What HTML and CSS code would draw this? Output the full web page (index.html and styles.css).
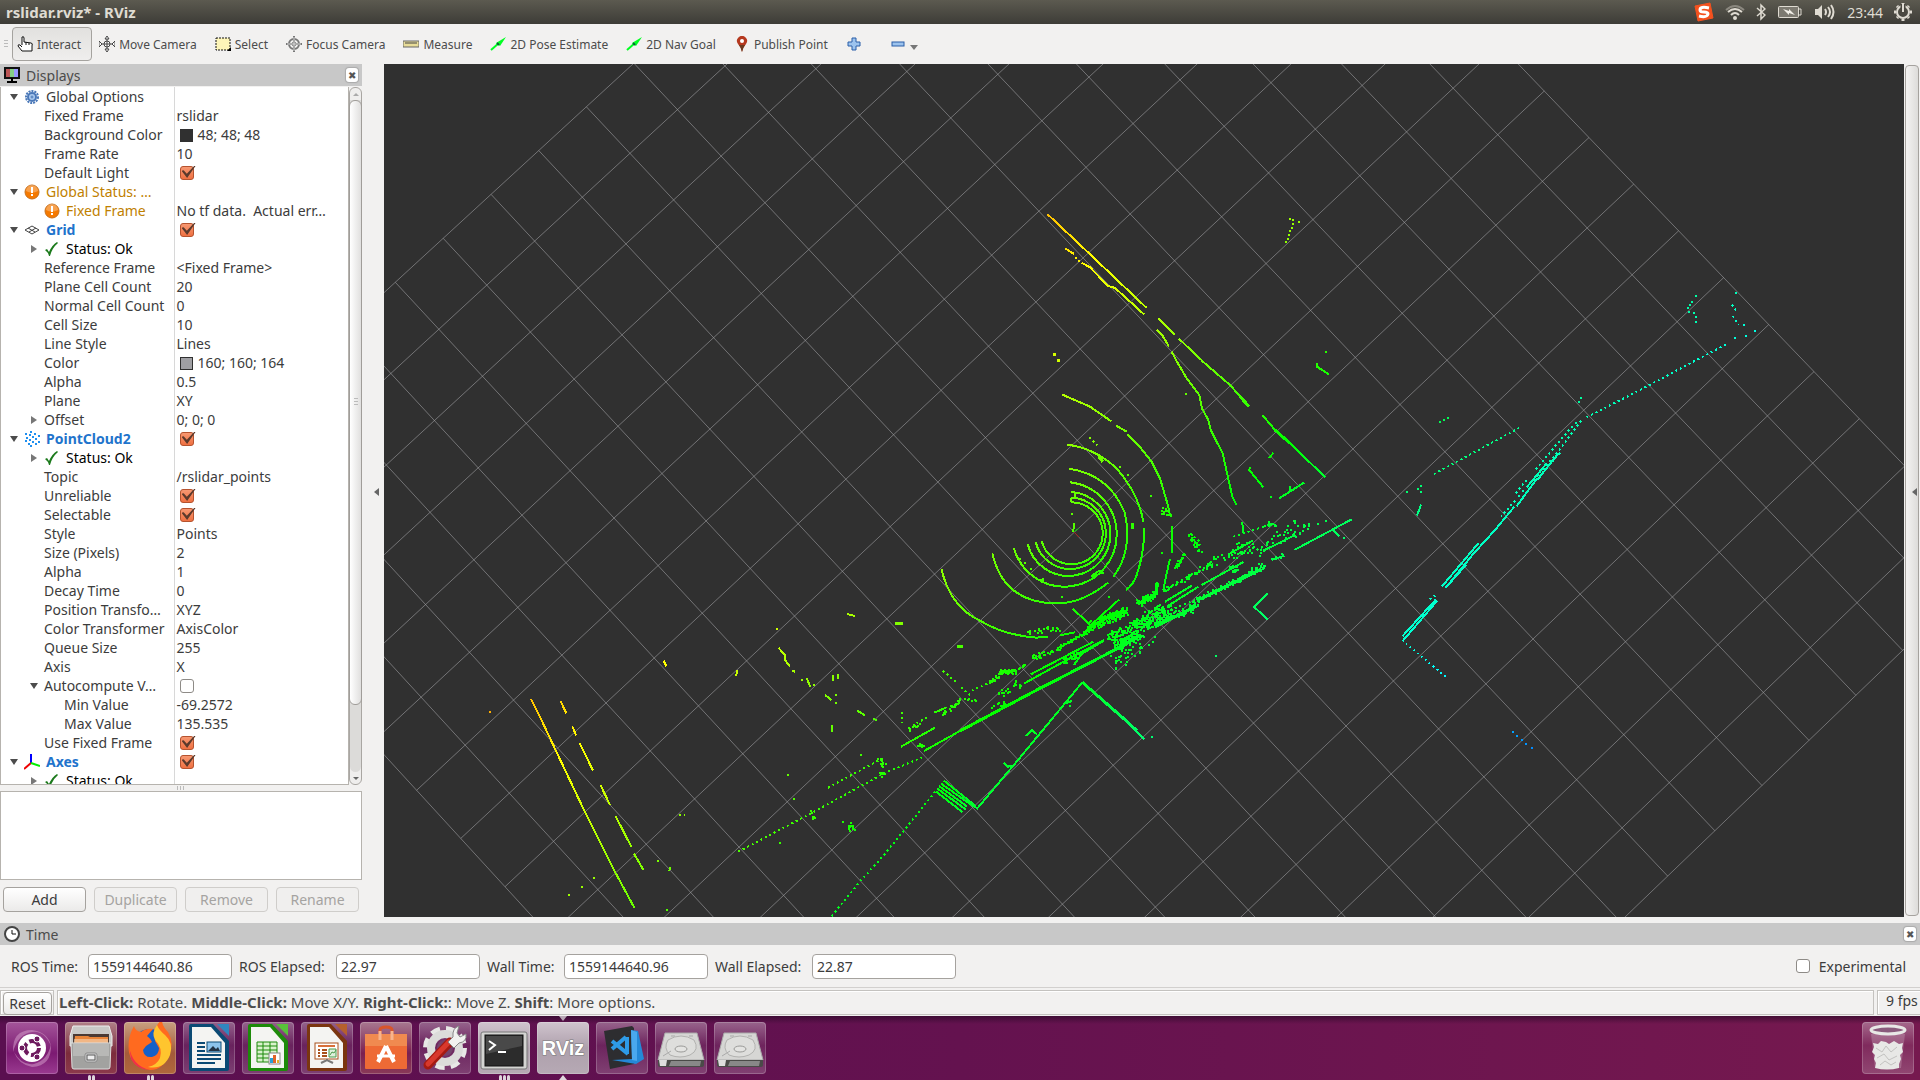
FILE: index.html
```html
<!DOCTYPE html>
<html lang="en">
<head>
    <meta charset="utf-8">
    <title>rslidar.rviz* - RViz</title>
    <meta name="viewport" content="width=device-width, initial-scale=1.0">
    <link rel="stylesheet" href="styles.css">
</head>
<body>
    <svg class="defs" width="0" height="0" aria-hidden="true">
        <symbol id="warn" viewBox="0 0 16 16">
            <circle cx="8" cy="8" r="7" fill="#f57900" stroke="#c8701c"/>
            <path d="M2 7a6 6 0 0 1 12 0q-6 3-12 0" fill="#fff" opacity=".3"/>
            <path d="M7 3h2v6H7zM7 10h2v2H7z" fill="#fff"/>
        </symbol>
        <symbol id="ok" viewBox="0 0 16 16">
            <path d="M1 9l2-1 2 3Q8 4 13 1l1 1Q8 7 6 15H5Q4 11 1 9z" fill="#1c7a1c"/>
        </symbol>
        <symbol id="arrow" viewBox="0 0 16 16">
            <path d="M1 14L9 7" stroke="#0f2" stroke-width="2"/>
            <path d="M6 7L16 1L10 10z" fill="#0f2"/>
            <path d="M7 7l2 2" stroke="#063" stroke-width="2"/>
        </symbol>
        <symbol id="disk" viewBox="0 0 52 52">
            <path d="M10 11h32l7 27H3z" fill="#d6d6d4" stroke="#aaa"/>
            <path d="M3 38h46v5q0 2-2 2H5q-2 0-2-2z" fill="#4a4a48"/>
            <path d="M16 39h30l-1 5H14z" fill="#888"/>
            <path d="M4 38h8l-1 6H5z" fill="#ddd"/>
            <path d="M13 18q13-8 26 0 6 10-4 15-10 4-20 0-7-7-2-15z" fill="#dededc" stroke="#b2b2b0"/>
            <ellipse cx="26" cy="27" rx="6" ry="3" fill="#e4e4e2" stroke="#9a9a98"/>
            <path d="M8 34l8-5M16 14h4M34 14h4" stroke="#aaa"/>
        </symbol>
    </svg>

    <header class="topbar">
        <h1>rslidar.rviz* - RViz</h1>
        <div class="indicators">
            <svg width="20" height="20" viewBox="0 0 20 20"><path d="M1 4L16 1L19 16L4 19z" fill="#f4511e" stroke="#f4511e" stroke-width="1" stroke-linejoin="round"/><path d="M15 6Q6 4 6 8Q6 10 10 10Q14 10 14 12Q13 16 5 14" fill="none" stroke="#fff" stroke-width="3"/></svg>
            <svg width="20" height="16" viewBox="0 0 20 16" fill="none" stroke="#dfdbd2" stroke-width="2"><path d="M1 6Q10-2 19 6" stroke="#8b887f"/><path d="M3 8Q10 2 17 8M6 11Q10 7 14 11"/><circle cx="10" cy="14" r="1"/></svg>
            <svg width="10" height="18" viewBox="0 0 10 18" fill="none" stroke="#dfdbd2" stroke-width="1.5"><path d="M1 5L9 12L5 16V2L9 6L1 13"/></svg>
            <svg width="26" height="14" viewBox="0 0 26 14"><rect x="1.5" y="1.5" width="20" height="11" rx="1" fill="#7d7a71" stroke="#dfdbd2"/><path d="M22 4h2v6h-2" fill="none" stroke="#dfdbd2"/><path d="M6 4l6 2 0-2 6 6-6-2 0 2z" fill="#f2efe8"/></svg>
            <svg width="22" height="18" viewBox="0 0 22 18" fill="none" stroke="#dfdbd2" stroke-width="2"><path d="M1 6h3l4-4v14l-4-4H1z" fill="#dfdbd2" stroke="none"/><path d="M11 6q2 3 0 6M14 4q4 5 0 10M17 2q5 7 0 14"/></svg>
            <time>23:44</time>
            <svg width="18" height="18" viewBox="0 0 18 18" fill="none" stroke="#dfdbd2"><circle cx="9" cy="9" r="6" stroke-width="2"/><path d="M9 0v2M9 16v2M0 9h2M16 9h2M3 3l1 1M15 3l-1 1M3 15l1-1M15 15l-1-1" stroke-width="3"/><path d="M9 1v9" stroke="#48463f" stroke-width="5"/><path d="M9 1v8" stroke-width="2"/></svg>
        </div>
    </header>

    <nav class="toolbar">
        <span class="grip"></span>
        <button class="tool active"><svg viewBox="0 0 16 16"><path d="M5 9V1q2-1 2 1v4l7 1q2 0 1 3v5H5L1 10q0-2 2-1l2 2" fill="#fff" stroke="#111"/><path d="M9 6v3M12 7v2" stroke="#111"/></svg>Interact</button>
        <button class="tool"><svg viewBox="0 0 16 16" fill="#fff" stroke="#444"><circle cx="8" cy="8" r="3"/><path d="M8 0l2 3H6zM8 16l2-3H6zM0 5l3 3-3 3zM16 5l-3 3 3 3z"/><path d="M3 8h10M8 3v10"/></svg>Move Camera</button>
        <button class="tool"><svg viewBox="0 0 16 16"><rect x="1" y="2" width="14" height="12" fill="#fdf5b8" stroke="#111" stroke-dasharray="2 1"/><path d="M16 11v4h-4z"/></svg>Select</button>
        <button class="tool"><svg viewBox="0 0 16 16" fill="none" stroke="#777"><circle cx="8" cy="8" r="5" stroke-width="2"/><circle cx="8" cy="8" r="2"/><path d="M8 0v16M0 8h16" stroke-width="2"/><path d="M8 1v14M1 8h14" stroke="#ddd"/></svg>Focus Camera</button>
        <button class="tool"><svg viewBox="0 0 16 16"><rect x="0" y="5" width="16" height="6" fill="#e8dc98" stroke="#666"/><path d="M3 6v2M5 6v2M7 6v2M9 6v2M11 6v2M13 6v2" stroke="#444"/></svg>Measure</button>
        <button class="tool"><svg><use href="#arrow"/></svg>2D Pose Estimate</button>
        <button class="tool"><svg><use href="#arrow"/></svg>2D Nav Goal</button>
        <button class="tool"><svg viewBox="0 0 16 16"><path d="M8 16Q7 11 4 8A5 5 0 1 1 12 8Q9 11 8 16z" fill="#b5391f"/><path d="M8 16Q7 12 5 9h6Q9 12 8 16z" fill="#6b3a20"/><circle cx="8" cy="5" r="2" fill="#fff"/></svg>Publish Point</button>
        <button class="tool small" aria-label="Add tool"><svg viewBox="0 0 16 16"><path d="M6 2h4v4h4v4h-4v4H6v-4H2V6h4z" fill="#9cc3ee" stroke="#2a5fa8"/></svg></button>
        <button class="tool small" aria-label="Remove tool"><svg viewBox="0 0 16 16"><rect x="2" y="6" width="12" height="4" fill="#9cc3ee" stroke="#2a5fa8"/></svg><span class="drop"></span></button>
    </nav>

    <main class="workspace">
        <aside class="displays">
            <div class="dock-title">
                <svg viewBox="0 0 16 16"><rect x="1" y="1" width="14" height="10" fill="#86d086" stroke="#111" stroke-width="2"/><path d="M2 2h4v8H2z" fill="#b55"/><path d="M10 2h4v8h-4z" fill="#99f"/><path d="M7 11h2v3H7zM3 14h10v2H3z"/></svg>
                <h2>Displays</h2>
                <button class="close" aria-label="Close Displays">✖</button>
            </div>
            <div class="tree">
                <div class="tree-view">
                    <table>
                        <tbody>
                            <tr><th><span class="name open"><svg viewBox="0 0 16 16" fill="none" stroke="#4a78b8"><circle cx="8" cy="8" r="6" stroke-width="2" stroke-dasharray="2 1"/><circle cx="8" cy="8" r="4" fill="#a9c8ee" stroke-width="2"/><circle cx="8" cy="8" r="1"/></svg>Global Options</span></th><td></td></tr>
                            <tr><th><span class="name l1">Fixed Frame</span></th><td>rslidar</td></tr>
                            <tr><th><span class="name l1">Background Color</span></th><td><i class="swatch dark"></i>48; 48; 48</td></tr>
                            <tr><th><span class="name l1">Frame Rate</span></th><td>10</td></tr>
                            <tr><th><span class="name l1">Default Light</span></th><td><input type="checkbox" aria-label="Default Light" checked></td></tr>
                            <tr class="warning"><th><span class="name open"><svg><use href="#warn"/></svg>Global Status: …</span></th><td></td></tr>
                            <tr class="warning"><th><span class="name l1"><svg><use href="#warn"/></svg>Fixed Frame</span></th><td>No tf data.&nbsp; Actual err…</td></tr>
                            <tr class="display"><th><span class="name open"><svg viewBox="0 0 16 16" fill="none" stroke="#444"><path d="M1 8l7-4 7 4-7 4zM4 6l7 4M12 6l-7 4"/></svg>Grid</span></th><td><input type="checkbox" aria-label="Grid" checked></td></tr>
                            <tr class="status"><th><span class="name l1 closed"><svg><use href="#ok"/></svg>Status: Ok</span></th><td></td></tr>
                            <tr><th><span class="name l1">Reference Frame</span></th><td>&lt;Fixed Frame&gt;</td></tr>
                            <tr><th><span class="name l1">Plane Cell Count</span></th><td>20</td></tr>
                            <tr><th><span class="name l1">Normal Cell Count</span></th><td>0</td></tr>
                            <tr><th><span class="name l1">Cell Size</span></th><td>10</td></tr>
                            <tr><th><span class="name l1">Line Style</span></th><td>Lines</td></tr>
                            <tr><th><span class="name l1">Color</span></th><td><i class="swatch"></i>160; 160; 164</td></tr>
                            <tr><th><span class="name l1">Alpha</span></th><td>0.5</td></tr>
                            <tr><th><span class="name l1">Plane</span></th><td>XY</td></tr>
                            <tr><th><span class="name l1 closed">Offset</span></th><td>0; 0; 0</td></tr>
                            <tr class="display"><th><span class="name open"><svg viewBox="0 0 16 16" fill="none" stroke="#2090f0" stroke-width="2"><path d="M6 1h2M1 3h2M10 3h2M5 4h2M14 5h2M2 7h2M8 6h2M11 8h2M5 9h2M1 10h2M14 11h2M8 11h2M4 13h2M11 13h2M6 15h2"/></svg>PointCloud2</span></th><td><input type="checkbox" aria-label="PointCloud2" checked></td></tr>
                            <tr class="status"><th><span class="name l1 closed"><svg><use href="#ok"/></svg>Status: Ok</span></th><td></td></tr>
                            <tr><th><span class="name l1">Topic</span></th><td>/rslidar_points</td></tr>
                            <tr><th><span class="name l1">Unreliable</span></th><td><input type="checkbox" aria-label="Unreliable" checked></td></tr>
                            <tr><th><span class="name l1">Selectable</span></th><td><input type="checkbox" aria-label="Selectable" checked></td></tr>
                            <tr><th><span class="name l1">Style</span></th><td>Points</td></tr>
                            <tr><th><span class="name l1">Size (Pixels)</span></th><td>2</td></tr>
                            <tr><th><span class="name l1">Alpha</span></th><td>1</td></tr>
                            <tr><th><span class="name l1">Decay Time</span></th><td>0</td></tr>
                            <tr><th><span class="name l1">Position Transfo…</span></th><td>XYZ</td></tr>
                            <tr><th><span class="name l1">Color Transformer</span></th><td>AxisColor</td></tr>
                            <tr><th><span class="name l1">Queue Size</span></th><td>255</td></tr>
                            <tr><th><span class="name l1">Axis</span></th><td>X</td></tr>
                            <tr><th><span class="name l1 open">Autocompute V…</span></th><td><input type="checkbox" aria-label="Autocompute Value Bounds"></td></tr>
                            <tr><th><span class="name l2">Min Value</span></th><td>-69.2572</td></tr>
                            <tr><th><span class="name l2">Max Value</span></th><td>135.535</td></tr>
                            <tr><th><span class="name l1">Use Fixed Frame</span></th><td><input type="checkbox" aria-label="Use Fixed Frame" checked></td></tr>
                            <tr class="display"><th><span class="name open"><svg viewBox="0 0 16 16" fill="none" stroke-width="2"><path d="M7 0v9" stroke="#00f"/><path d="M7 9L0 15" stroke="#e00"/><path d="M7 9l9 3" stroke="#0e0"/></svg>Axes</span></th><td><input type="checkbox" aria-label="Axes" checked></td></tr>
                            <tr class="status"><th><span class="name l1 closed"><svg><use href="#ok"/></svg>Status: Ok</span></th><td></td></tr>
                        </tbody>
                    </table>
                </div>
                <div class="scrollbar">
                    <span class="step up"></span>
                    <div class="track"><div class="thumb"><span class="grip"></span></div></div>
                    <span class="step down"></span>
                </div>
            </div>
            <div class="splitter"><span class="grip"></span></div>
            <div class="description"></div>
            <div class="actions">
                <button>Add</button>
                <button disabled>Duplicate</button>
                <button disabled>Remove</button>
                <button disabled>Rename</button>
            </div>
        </aside>

        <button class="collapse" aria-label="Collapse left panel"></button>

        <svg class="view" viewBox="384 64 1520 853" preserveAspectRatio="xMidYMid slice" shape-rendering="crispEdges" role="img" aria-label="3D view">
            <defs>
                <!-- AxisColor rainbow, running along the X axis of the grid -->
                <linearGradient id="rainbow" gradientUnits="userSpaceOnUse" x1="765" y1="203" x2="1679" y2="1176">
                    <stop offset="0" stop-color="#f00"/>
                    <stop offset=".2" stop-color="#ff0"/>
                    <stop offset=".4" stop-color="#0f0"/>
                    <stop offset=".6" stop-color="#0ff"/>
                    <stop offset=".8" stop-color="#00f"/>
                    <stop offset="1" stop-color="#f0f"/>
                </linearGradient>
            </defs>
            <path id="grid"/>
            <g id="cloud"></g>
            <path d="M1074 532l5 5" stroke="#a22"/>
            <path d="M1074 532l5-4" stroke="#2a2"/>
        </svg>

        <button class="collapse right" aria-label="Collapse right panel"></button>
    </main>

    <section class="time">
        <div class="dock-title">
            <svg viewBox="0 0 16 16"><circle cx="8" cy="8" r="7" fill="#fff" stroke="#444" stroke-width="2"/><path d="M8 4v4h4" fill="none" stroke="#111"/></svg>
            <h2>Time</h2>
            <button class="close" aria-label="Close Time">✖</button>
        </div>
        <form class="clocks">
            <label for="rosTime">ROS Time:</label>
            <input type="text" id="rosTime" value="1559144640.86">
            <label for="rosElapsed" class="long">ROS Elapsed:</label>
            <input type="text" id="rosElapsed" value="22.97">
            <label for="wallTime">Wall Time:</label>
            <input type="text" id="wallTime" value="1559144640.96">
            <label for="wallElapsed" class="long">Wall Elapsed:</label>
            <input type="text" id="wallElapsed" value="22.87">
            <label class="experimental"><input type="checkbox"> Experimental</label>
        </form>
    </section>

    <footer class="statusbar">
        <div class="cell reset"><button>Reset</button></div>
        <p class="cell message"><b>Left-Click:</b> Rotate. <b>Middle-Click:</b> Move X/Y. <b>Right-Click:</b>: Move Z. <b>Shift</b>: More options.</p>
        <div class="cell fps">9 fps</div>
    </footer>

    <nav class="launcher">
        <a href="#" class="app dash" aria-label="Search your computer"><svg viewBox="0 0 52 52"><path d="M7 30Q6 8 26 8Q42 10 45 24Q38 8 26 10Q12 12 7 30zM45 22Q46 44 26 45Q12 42 8 30Q16 44 28 42Q42 38 45 22z" fill="#d9a3d0" opacity=".5"/><circle cx="26" cy="26" r="14" fill="#fff"/><circle cx="26" cy="26" r="7" fill="none" stroke="#6d1a5e" stroke-width="4" stroke-dasharray="12 3"/><g fill="#6d1a5e" stroke="#fff"><circle cx="16" cy="26" r="3"/><circle cx="31" cy="17" r="3"/><circle cx="31" cy="35" r="3"/></g></svg></a>
        <a href="#" class="app files" aria-label="Files"><svg viewBox="0 0 52 52"><path d="M8 4h36l3 10v10H5V14z" fill="#c9c9c7" stroke="#eee"/><path d="M8 12h36v12H8z" fill="#4a3a34"/><path d="M10 14h13l2 1h18v8H9z" fill="#e8853a"/><path d="M9 18h34M9 20h34" stroke="#fbe8d0"/><path d="M6 21h40l-1 24q0 2-2 2H9q-2 0-2-2z" fill="#a2a2a0" stroke="#ddd"/><path d="M8 22h36v12H8z" fill="#b8b8b6"/><rect x="20" y="31" width="12" height="9" rx="2" fill="#ddd" stroke="#888"/><rect x="22" y="33" width="8" height="5" fill="#eee" stroke="#555"/></svg><span class="pips"><i></i><i></i></span></a>
        <a href="#" class="app firefox" aria-label="Firefox"><svg viewBox="0 0 52 52"><circle cx="26" cy="26" r="19" fill="#1560c8"/><path d="M10 4q1 5 7 6 5-4 12-3l-6 7q4 3 5 6l-6 4-3 4q1 8 9 7 7-2 7-9l-4-7q6-5 2-9-6-4-1-2 0-6 6-10 0 6 6 12 6 10 2 20Q40 48 26 48 8 46 5 30 3 16 10 4z" fill="#ff6a1f"/><path d="M33 3q-6 8-2 15 8 8 5 18-3 7-12 9 16 3 22-12 4-12-5-20-6-5-8-10z" fill="#ffc52e"/><path d="M5 24q3 20 21 24-13 0-19-11z" fill="#f03048"/></svg><span class="pips"><i></i><i></i></span></a>
        <a href="#" class="app" aria-label="LibreOffice Writer"><svg viewBox="0 0 52 52"><path d="M8 2h22l16 17v28q0 2-2 2H8q-2 0-2-2V4q0-2 2-2z" fill="#0b4a74"/><path d="M34 2h12v12z" fill="#2f86bf"/><path d="M9 5h19l14 16v25H9z" fill="#f4f4f2"/><path d="M14 21h8M14 25h8M14 29h8M14 33h24M14 37h24M14 41h18" stroke="#0b4a74" stroke-width="2"/><rect x="24" y="20" width="14" height="10" fill="#8cc4ec" stroke="#0b4a74"/><path d="M25 29l5-5 3 3 2-2 2 4z" fill="#234"/></svg></a>
        <a href="#" class="app" aria-label="LibreOffice Calc"><svg viewBox="0 0 52 52"><path d="M8 2h22l16 17v28q0 2-2 2H8q-2 0-2-2V4q0-2 2-2z" fill="#1d8a0a"/><path d="M34 2h12v12z" fill="#58c13a"/><path d="M9 5h19l14 16v25H9z" fill="#f4f4f2"/><path d="M15 20h20v20H15zM15 24h20M15 28h20M15 32h20M15 36h20M21 20v20M28 20v20" fill="#d9f2cc" stroke="#1d8a0a"/><rect x="27" y="31" width="11" height="11" fill="#fff" stroke="#888"/><path d="M28 36h3v5h-3z" fill="#28a0d8"/><path d="M31 33h3v8h-3z" fill="#e0642a"/><path d="M35 38h2v3h-2z" fill="#e8b020"/></svg></a>
        <a href="#" class="app" aria-label="LibreOffice Impress"><svg viewBox="0 0 52 52"><path d="M8 2h22l16 17v28q0 2-2 2H8q-2 0-2-2V4q0-2 2-2z" fill="#7a3510"/><path d="M34 2h12v12z" fill="#b5602c"/><path d="M9 5h19l14 16v25H9z" fill="#f4f4f2"/><rect x="14" y="21" width="23" height="16" fill="#fff" stroke="#a8501c"/><path d="M17 24h17" stroke="#d8703a" stroke-width="2"/><path d="M17 28h2M17 31h2M17 34h2M21 28h5M21 31h5M21 34h5" stroke="#a8501c" stroke-width="2"/><path d="M28 27h7v8h-7zM29 33l2-3 2 1 2-3" fill="#dff0dc" stroke="#4a9a4a"/><path d="M26 37v2M20 41l6-3 6 3" fill="none" stroke="#777" stroke-width="2"/></svg></a>
        <a href="#" class="app store" aria-label="Ubuntu Software"><svg viewBox="0 0 52 52"><path d="M20 18V8q0-3 6-3t6 3v10" fill="none" stroke="#d9552a" stroke-width="3"/><path d="M5 12h42v34q0 1-1 1H6q-1 0-1-1z" fill="#ee6a35"/><path d="M5 12h42v12H5z" fill="#f08a50"/><path d="M20 18V9M32 18V9" stroke="#f7b48e" stroke-width="3"/><path d="M26 24L18 40M26 24l8 16" stroke="#fff" stroke-width="4"/><path d="M17 34h18" stroke="#fff" stroke-width="3"/></svg></a>
        <a href="#" class="app" aria-label="System Settings"><svg viewBox="0 0 52 52"><circle cx="26" cy="26" r="19" fill="none" stroke="#e8e8e6" stroke-width="6" stroke-dasharray="9 6"/><circle cx="26" cy="26" r="14" fill="none" stroke="#dcdcda" stroke-width="8"/><circle cx="26" cy="26" r="8" fill="#74436c"/><path d="M9 43L31 20" stroke="#a51a12" stroke-width="9" stroke-linecap="round"/><path d="M9 42L30 20" stroke="#d8382c" stroke-width="5" stroke-linecap="round"/><path d="M29 20l5-5q-1-9 6-11l-2 7 3 4 6-3q1 8-7 9l-5 5z" fill="#f2f2f0" stroke="#888"/></svg></a>
        <a href="#" class="app running" aria-label="Terminal"><svg viewBox="0 0 52 52"><rect x="3" y="10" width="46" height="37" rx="2" fill="#d4d4d2" stroke="#777"/><rect x="7" y="13" width="38" height="31" fill="#2c2c2c" stroke="#111"/><path d="M8 14h36v10L8 32z" fill="#666" opacity=".5"/><path d="M11 19l6 4-6 5" fill="none" stroke="#fff" stroke-width="2"/><path d="M20 30h8" stroke="#fff" stroke-width="2"/></svg><span class="pips"><i></i><i></i><i></i></span></a>
        <a href="#" class="app running focused" aria-label="RViz"><svg viewBox="0 0 52 52"><text x="26" y="33" text-anchor="middle" class="rviz-logo">RViz</text></svg></a>
        <a href="#" class="app" aria-label="Visual Studio Code"><svg viewBox="0 0 52 52"><path d="M8 9l28-5 2 2v36L14 47z" fill="#2d2d30"/><path d="M35 8l7 1 6 28-8 5-24-4 20-1z" fill="#2489d8"/><path d="M35 8l1 30 5 1V10z" fill="#4aa8ee"/><path d="M30 15L16 27M16 19l16 13M31 15v17" fill="none" stroke="#2e9be8" stroke-width="4"/></svg></a>
        <a href="#" class="app" aria-label="Volume"><svg><use href="#disk"/></svg></a>
        <a href="#" class="app" aria-label="Volume"><svg><use href="#disk"/></svg></a>
        <a href="#" class="app trash" aria-label="Trash"><svg viewBox="0 0 52 52"><path d="M9 12h34l-4 34H13z" fill="#fff" opacity=".2"/><path d="M11 21l5 1 3-3 5 1 3 2 5-3 5 3 4-1-1 5 1 4-3 3 1 4-2 5v4q-12 3-24 0l1-5-2-4 1-4-3-3 2-5z" fill="#e8e8e6"/><path d="M14 26l6 4 4-6 5 6 6-5M15 36l7-4 5 6 8-4M18 43l5-4 6 4 5-3" fill="none" stroke="#c2c2c0"/><ellipse cx="26" cy="8" rx="17" ry="4" fill="#8a5a7c" stroke="#e8e8e6" stroke-width="3"/></svg></a>
    </nav>

    <script src="scene.js"></script>
</body>
</html>
```
FILE: styles.css
```css
* {
    box-sizing: border-box;
}
body {
    margin: 0;
    height: 100vh;
    display: flex;
    flex-direction: column;
    overflow: hidden;
    background: #f2f1f0;
    color: #3c3c3c;
    font-family: "Noto Sans", "Open Sans", sans-serif;
    font-size: 14px;
}
h1, h2, p {
    margin: 0;
}
button, input {
    font: inherit;
    color: inherit;
}
button {
    padding: 0;
}
svg {
    display: block;
    flex: none;
}
.defs {
    position: absolute;
}
.topbar {
    display: flex;
    align-items: center;
    justify-content: space-between;
    flex: none;
    height: 24px;
    padding: 0 8px 0 6px;
    background: linear-gradient(#5c5a50, #3d3c37);
    color: #dfdbd2;
}
.topbar h1 {
    font-size: 15px;
    font-weight: bold;
}
.indicators {
    display: flex;
    align-items: center;
    gap: 11px;
}

/* toolbar */
.toolbar {
    display: flex;
    align-items: center;
    flex: none;
    gap: 2px;
    height: 40px;
    padding: 0 4px;
}
.grip {
    width: 4px;
    height: 8px;
    background: repeating-linear-gradient(#bbb 0 1px, transparent 1px 3px);
}
.tool {
    display: flex;
    align-items: center;
    gap: 4px;
    height: 34px;
    padding: 0 10px 0 4px;
    border: 1px solid transparent;
    border-radius: 4px;
    background: none;
    color: #4c4c4c;
    font-size: 12px;
}
.toolbar > .grip + .tool {
    margin-left: 2px;
}
.tool svg {
    width: 16px;
    height: 16px;
}
.tool.active {
    border-color: #a5a39f;
    background: linear-gradient(#e2e1df, #efeeed);
}
.tool.small {
    padding-right: 20px;
}
.drop {
    margin-top: 6px;
    border: 4px solid transparent;
    border-top: 5px solid #777;
    border-bottom: 0;
}

/* docks */
.workspace {
    display: flex;
    flex: 1;
    min-height: 0;
    padding-bottom: 6px;
}
.displays {
    display: flex;
    flex-direction: column;
    flex: none;
    width: 362px;
}
.dock-title {
    display: flex;
    align-items: center;
    gap: 6px;
    flex: none;
    height: 22px;
    padding: 0 4px;
    background: #c8c8c8;
    color: #4c4c4c;
}
.dock-title svg {
    width: 16px;
    height: 16px;
}
.dock-title h2 {
    flex: 1;
    font-size: 14px;
    font-weight: normal;
}
.close {
    width: 12px;
    height: 14px;
    border: 0;
    border-radius: 3px;
    background: #fff;
    box-shadow: 0 0 1px 1px #aaa;
    color: #555;
    font-size: 10px;
    line-height: 14px;
}
.tree {
    display: flex;
    flex: 1;
    min-height: 0;
    margin-top: 1px;
}
.tree-view {
    flex: 1;
    overflow: hidden;
    border: solid #b6b3ae;
    border-width: 0 1px 1px;
    background: #fff;
}
.tree table {
    width: 100%;
    table-layout: fixed;
    border-collapse: collapse;
}
.tree tr {
    height: 19px;
}
.tree th, .tree td {
    padding: 0;
    height: 19px;
    line-height: 19px;
    font-weight: normal;
    text-align: left;
    white-space: nowrap;
    overflow: hidden;
}
.tree th {
    width: 173px;
    border-right: 1px solid #d8d8d8;
}
.tree td {
    padding-left: 2px;
}
.name {
    display: flex;
    align-items: center;
    padding-left: 9px;
}
.name.l1 {
    padding-left: 29px;
}
.name.l2 {
    padding-left: 49px;
}
.name::before {
    content: "";
    width: 8px;
    margin-right: 6px;
}
.name.open::before {
    width: 0;
    border: 4px solid transparent;
    border-top: 6px solid #4c4c4c;
    border-bottom: 0;
}
.name.closed::before {
    width: 0;
    margin: 0 7px 0 1px;
    border: 4px solid transparent;
    border-left: 6px solid #777;
    border-right: 0;
}
.name svg {
    width: 16px;
    height: 16px;
    margin-right: 6px;
}
.warning th {
    color: #c08000;
}
.display th {
    color: #1f74cc;
    font-weight: bold;
}
.status th {
    color: #000;
}
.swatch {
    display: inline-block;
    width: 13px;
    height: 13px;
    margin: 0 5px 0 3px;
    vertical-align: -2px;
    border: 1px solid #303030;
    background: #a0a0a4;
}
.swatch.dark {
    background: #303030;
}
input[type="checkbox"] {
    appearance: none;
    position: relative;
    width: 14px;
    height: 14px;
    margin: 0 3px;
    vertical-align: -2px;
    border: 1px solid #8e8b87;
    border-radius: 3px;
    background: #fff;
}
input[type="checkbox"]:checked {
    border-color: #b5532f;
    background: linear-gradient(#f79872, #ef7142);
}
input[type="checkbox"]:checked::before {
    content: "";
    position: absolute;
    left: 1px;
    top: -1px;
    width: 14px;
    height: 12px;
    background: #5c3a2c;
    clip-path: polygon(0 40%, 15% 35%, 38% 65%, 90% 0, 100% 0, 40% 100%);
}
.scrollbar {
    display: flex;
    flex-direction: column;
    width: 13px;
    border: 1px solid #a9a6a2;
    border-radius: 6px;
    background: #efeeed;
}
.step {
    display: flex;
    align-items: center;
    justify-content: center;
    height: 12px;
}
.step::before {
    content: "";
    border: 3px solid transparent;
}
.step.up::before {
    border-bottom-color: #aaa;
    border-top: 0;
}
.step.down::before {
    border-top-color: #666;
    border-bottom: 0;
}
.track {
    flex: 1;
    border-radius: 0 0 6px 6px;
    background: #dcdbd9;
}
.thumb {
    display: flex;
    align-items: center;
    justify-content: center;
    height: 90%;
    margin: 0 -1px;
    border: 1px solid #a09d99;
    border-radius: 6px;
    background: linear-gradient(90deg, #fff, #e0dfde);
}
.splitter {
    display: flex;
    align-items: center;
    justify-content: center;
    flex: none;
    height: 6px;
}
.splitter .grip {
    width: 8px;
    height: 4px;
    background: repeating-linear-gradient(90deg, #bbb 0 1px, transparent 1px 3px);
}
.description {
    flex: none;
    height: 89px;
    border: 1px solid #b6b3ae;
    background: #fff;
}
.actions {
    display: grid;
    grid-template-columns: repeat(4, 1fr);
    gap: 8px;
    padding: 7px 3px 5px;
}
.actions button, .reset button {
    height: 25px;
    border: 1px solid #a5a29e;
    border-radius: 4px;
    background: linear-gradient(#fff, #ebeae9);
    line-height: 21px;
}
.actions button:disabled {
    border-color: #cfcdca;
    background: #f0efee;
    color: #a5a3a1;
}

.collapse {
    flex: none;
    width: 22px;
    border: 0;
    background: none;
}
.collapse::before {
    content: "";
    display: inline-block;
    margin-left: 6px;
    border: 4px solid transparent;
    border-right: 5px solid #666;
    border-left: 0;
}
.collapse.right {
    width: 14px;
    margin: 1px;
    border: 1px solid #a5a29e;
    border-radius: 4px;
    background: linear-gradient(90deg, #f4f3f2, #dddcda);
}
.collapse.right::before {
    margin-left: 4px;
}

/* 3D view */
.view {
    flex: 1;
    min-width: 0;
    height: 100%;
    background: #303030;
}
#grid {
    fill: none;
    stroke: #a0a0a4;
    stroke-opacity: .6;
    shape-rendering: auto;
}
#cloud {
    fill: none;
    stroke: url(#rainbow);
    stroke-width: 2;
}

/* time panel */
.time {
    flex: none;
}
.clocks {
    display: flex;
    align-items: center;
    gap: 7px;
    height: 42px;
    padding: 0 14px 0 11px;
}
.clocks label {
    width: 70px;
    white-space: nowrap;
}
.clocks label.long {
    width: 90px;
}
.clocks input[type="text"] {
    width: 144px;
    height: 25px;
    padding: 0 4px;
    border: 1px solid #a5a29e;
    border-radius: 4px;
    background: #fff;
}
.clocks label.experimental {
    display: flex;
    align-items: center;
    gap: 6px;
    width: auto;
    margin-left: auto;
}

/* status bar */
.statusbar {
    display: flex;
    flex: none;
    gap: 3px;
    height: 29px;
    padding: 2px 0 1px;
    border-top: 1px solid #d2d0ce;
}
.cell {
    border: 1px solid #c4c2bf;
    box-shadow: inset 1px 1px #fff;
    line-height: 24px;
    white-space: nowrap;
}
.reset {
    width: 54px;
    padding: 1px 1px 0 2px;
}
.reset button {
    width: 49px;
    height: 23px;
}
.message {
    flex: 1;
    padding-left: 1px;
    color: #4c4c4c;
    font-size: 15px;
    line-height: 22px;
}
.fps {
    width: 43px;
    padding-left: 8px;
    border-right: 0;
    line-height: 20px;
}

/* launcher */
.launcher {
    display: flex;
    flex: none;
    gap: 7px;
    height: 64px;
    padding: 6px 6px 0;
    background: linear-gradient(#2b0a28aa, transparent 8px), linear-gradient(90deg, #5a0f50, #64124f 50%, #76194f);
}
.app {
    position: relative;
    width: 52px;
    height: 52px;
    border-radius: 4px;
    background: linear-gradient(rgba(255, 255, 255, .35), rgba(255, 255, 255, .08) 45%, rgba(255, 255, 255, .2));
    box-shadow: inset 0 0 0 1px rgba(255, 255, 255, .2);
}
.app svg {
    width: 52px;
    height: 52px;
}
.dash {
    background: linear-gradient(#a4559a, #7c1a72 60%, #9a3a90);
}
.files {
    background: linear-gradient(#b08088, #7c2c3c 60%, #8c3a4c);
}
.firefox {
    background: linear-gradient(#c8a080, #a45a3a 60%, #b0683c);
}
.store {
    background: linear-gradient(#a87890, #7a2050 60%, #8a3a58);
}
.running {
    background: linear-gradient(#d0c4ce, #aea0ac 50%, #b6a9b4);
}
.trash {
    margin-left: auto;
}
.pips {
    position: absolute;
    left: 0;
    right: 0;
    bottom: -6px;
    display: flex;
    justify-content: center;
    gap: 1px;
}
.pips i {
    width: 3px;
    height: 5px;
    border-radius: 2px 2px 0 0;
    background: #ded6dc;
}
.focused::before, .focused::after {
    content: "";
    position: absolute;
    left: 22px;
    border: 4px solid transparent;
}
.focused::before {
    top: -6px;
    border-top: 5px solid #b9a8b6;
    border-bottom: 0;
}
.focused::after {
    bottom: -6px;
    border-bottom: 5px solid #ded6dc;
    border-top: 0;
}
.rviz-logo {
    fill: #fff;
    stroke: #777;
    stroke-width: 1px;
    paint-order: stroke;
    font: bold 20px "Liberation Sans", sans-serif;
}
```
FILE: scene.js
```js
const SVG = 'http://www.w3.org/2000/svg';
const cloud = document.getElementById('cloud');

// ground plane (cells from the origin) to screen
function project(u, v) {
    const w = 1 - 0.001195 * u + 0.001114 * v;
    return [
        1074.3 + (44.57 * u + 47.52 * v) / w,
        532.3 + (47.47 * u - 44.62 * v) / w
    ].map(n => n.toFixed(1)).join(' ');
}

let grid = '';
for (let i = -10; i <= 10; i++) {
    grid += `M${project(i, -10)}L${project(i, 10)}`;
    grid += `M${project(-10, i)}L${project(10, i)}`;
}
document.getElementById('grid').setAttribute('d', grid);

// fixed seed, so that the cloud is the same on each load
let seed = 7;
function random() {
    seed = (seed * 16807) % 2147483647;
    return seed / 2147483647;
}

// Scan tiles. Coordinates are thirds of a pixel from the tile's corner.
// solid: path with a width, dashed: sparse returns, dots: single returns,
// noise: [x1, y1, x2, y2, spread, count]
const tiles = [
    {
        x: 880, y: 360,
        solid: [
            'M572 427A93 93 0 1 1 485 543M574 413A107 107 0 1 1 467 546M574 396A126 126 0 1 1 443 552M571 367A157 157 0 1 1 402 565',
            'M568 326Q690 345 735 460Q758 575 700 650M684 668Q600 735 520 730Q370 725 337 580',
            'M560 254Q640 262 710 325Q775 400 790 485M793 503Q793 580 770 645Q760 675 738 690M184 626Q210 740 300 782Q370 825 470 833L505 830',
            'M545 103L630 140L694 184M709 197L740 215M742 224L775 255L815 305L840 355L865 440L870 468M876 498L876 578M870 596L860 640L850 690',
            'M888 0L920 55L958 105L966 145L985 180L992 210L1028 280L1048 370L1057 410L1070 436M963 0L1050 75L1107 139M1148 166L1185 210L1230 250L1336 352',
            'M1181 278L1167 294M1110 320L1108 330L1150 382M1198 415L1272 368M1231 378L1231 392M582 490L580 515M574 413V427M585 400V412',
            'M433 970L560 900L672 840M452 943L640 845M582 915L605 882L670 843M855 725L935 677M860 740L955 680M965 675L1090 606',
            'M1243 570L1415 478M1358 510L1378 530M1150 572L1245 525M1045 583L1118 542M1087 487L1089 520M1175 600L1210 588L1205 580',
            'M1162 700L1123 741L1163 779M607 967L414 1200M438 1128L455 1110L472 1124M578 746L632 796L718 718M540 826L585 817',
            'M63 1160L165 1103M163 1058L200 1042M530 866L575 843M132 1173L245 1110L370 1045L455 998L575 937L700 870L760 835M1009 884V890M745 1088L792 1138'
        ],
        thick: 'M1185 210L1230 250M1080 110L1107 139M655 288L668 305M757 488V506M44 789L68 792M230 859L248 861M240 1113L455 998L700 872L785 825M607 967L745 1088L770 1112M825 800L950 738M950 722L1140 630M610 820L650 790L700 762L740 754M775 730L810 715L828 700V670M370 935L408 932',
        dashed: 'M628 231L652 255M188 932L233 970M243 982L270 1005M275 992L320 972L340 955M67 1055V1090M110 1090L145 1070M850 690L1000 610M890 625L918 580M930 520L960 545L955 580M1060 530L1180 490M1130 570L1150 560M870 750L960 715',
        dots: [[576,463],[812,409],[720,320],[744,345],[918,101],[1174,412],[545,712],[686,712],[453,628],[435,608],[420,598],[845,580],[1392,535],[815,1130],[825,832],[808,855],[1245,482],[1288,492],[1315,492],[1338,482]],
        noise: [
            [330,970,370,935,12,30],[365,935,408,935,12,30],[460,895,540,865,14,26],[530,866,630,812,8,40],[630,800,740,754,24,140],
            [190,1065,240,1022,10,24],[240,1022,285,1020,8,8],[345,1040,380,1035,20,12],[360,1005,420,970,22,22],[415,925,435,918,8,8],
            [775,730,830,700,20,60],[830,700,832,668,6,20],[690,835,780,790,30,90],[775,790,860,750,40,130],[710,860,785,820,22,90],
            [800,800,950,735,26,80],[700,910,800,850,50,46],[545,910,600,875,22,26],[850,695,1000,610,14,44],[885,625,918,580,10,18],
            [930,522,962,580,12,20],[950,722,1145,625,14,90],[1055,630,1075,625,20,24],[1120,630,1150,620,18,24],[1000,605,1100,570,30,22],
            [1070,560,1140,575,36,20],[1150,500,1185,490,16,12],[1160,540,1280,510,32,28],[1225,490,1290,495,18,8],[440,820,540,803,18,24],
            [635,650,675,630,12,24],[480,660,495,665,8,10],[845,450,872,468,14,12],[80,1110,120,1095,14,12],[110,1155,130,1160,10,8],[570,1025,565,1040,14,6],[1175,600,1210,588,10,8]
        ]
    },
    {
        x: 1000, y: 180,
        solid: [
            'M143 103L265 218L440 384M196 205L222 222M245 248L270 262L305 298L325 318L345 324L385 360L433 404',
            'M475 416L525 464M537 476L603 540M470 449L487 466L507 500M515 515L528 540M951 550V560L986 583'
        ],
        thick: 'M160 523H168M171 541H179',
        dots: [[227,233],[238,243],[870,117],[880,121],[880,133],[875,143],[869,153],[866,165],[863,176],[858,186],[898,127],[979,516]],
        noise: []
    },
    {
        x: 1380, y: 260,
        solid: [
            'M345 810L277 885L200 980M295 850L186 979M258 915L197 983M168 1018L68 1128M172 1022L68 1143M403 740L345 810',
            'M123 734L111 767M472 655L410 738M535 580L472 660M500 610L440 682'
        ],
        dashed: 'M1059 168L1075 194M578 498L520 565L468 628M603 482L535 575L440 682M540 578L472 655M440 660L402 706M405 722L363 770M77 1150L202 1254M162 642L417 504M620 472L780 390L1040 252M1056 134L1070 155M1065 230V245M940 157L948 168V195M150 1018L162 1008L174 1014',
        dots: [[1097,228],[1125,212],[1092,194],[1069,98],[948,107],[936,125],[930,135],[923,144],[927,156],[597,427],[604,414],[588,489],[180,486],[192,480],[204,475],[82,695],[123,679],[115,686],[123,695],[399,1416],[411,1427],[426,1439],[439,1451],[456,1464],[418,708],[430,694]],
        noise: []
    },
    {
        x: 384, y: 640,
        solid: [
            'M441 177L470 235L510 320L600 510L690 690L752 805M530 184L547 220M565 259L576 286M587 310L627 391M650 436L678 495M695 529L743 622M750 641L778 689',
            'M839 62L847 79M1059 91L1057 108M1184 24L1203 45V60L1218 80M1225 92L1233 95M1268 115L1279 140M1348 106V124M1361 101V118M1323 165L1342 180M1420 212L1443 226M1466 237L1480 240M1345 256L1343 276M858 680L856 693M1390 -78L1412 -72',
            // building corner and the fence below the road
            'M1902 360L1780 505L1758 492M1670 430L1758 492M1665 438L1750 500M1660 446L1745 508M1655 454L1735 516M1680 422L1775 498M1860 368L1872 380L1888 376'
        ],
        dashed: 'M1332 443L1496 355M1063 635L1120 605L1290 515L1500 400L1620 350M1343 828L1377 787L1432 720L1500 645L1655 454M884 526H902',
        dots: [[318,217],[630,715],[593,740],[556,765],[849,810],[822,663],[1253,120],[1290,135],[1355,164],[1355,190],[1212,405],[1431,344],[1230,477],[1188,608],[1178,-34]],
        noise: [[1280,512,1292,535,8,8],[1385,545,1415,570,24,14],[1480,355,1500,375,14,10],[1490,395,1500,410,10,8]]
    }
];

function addPath(tile, d, width, dash) {
    const path = document.createElementNS(SVG, 'path');
    path.setAttribute('d', d.replace(/([MLQA]?)([^MLQAHV]+)|([HV])([^MLQAHV]+)/g, (all, cmd, nums, hv, n) => {
        if (hv) {
            return hv + (Number(n) / 3 + (hv === 'H' ? tile.x : tile.y));
        }
        const values = nums.trim().split(/[ ,]+/).map(Number);
        if (cmd === 'A') {
            const [rx, ry, rot, large, sweep, x, y] = values;
            return `A${rx / 3} ${ry / 3} ${rot} ${large} ${sweep} ${tile.x + x / 3} ${tile.y + y / 3}`;
        }
        return cmd + values.map((value, i) => value / 3 + (i % 2 ? tile.y : tile.x)).join(' ');
    }));
    if (width) {
        path.style.strokeWidth = width;
    }
    if (dash) {
        path.style.strokeDasharray = dash;
    }
    cloud.appendChild(path);
}

function dot(tile, x, y) {
    return `M${Math.round(tile.x + x / 3) - 1} ${Math.round(tile.y + y / 3)}h2`;
}

tiles.forEach(tile => {
    tile.solid.forEach(d => addPath(tile, d));
    if (tile.thick) {
        addPath(tile, tile.thick, 3);
    }
    if (tile.dashed) {
        addPath(tile, tile.dashed, 2, '2 3');
    }

    let points = tile.dots.map(([x, y]) => dot(tile, x, y)).join('');
    tile.noise.forEach(([x1, y1, x2, y2, spread, count]) => {
        for (let i = 0; i < count; i++) {
            const t = random();
            points += dot(tile,
                x1 + (x2 - x1) * t + (random() - 0.5) * spread,
                y1 + (y2 - y1) * t + (random() - 0.5) * spread);
        }
    });
    const path = document.createElementNS(SVG, 'path');
    path.setAttribute('d', points);
    cloud.appendChild(path);
});
```
